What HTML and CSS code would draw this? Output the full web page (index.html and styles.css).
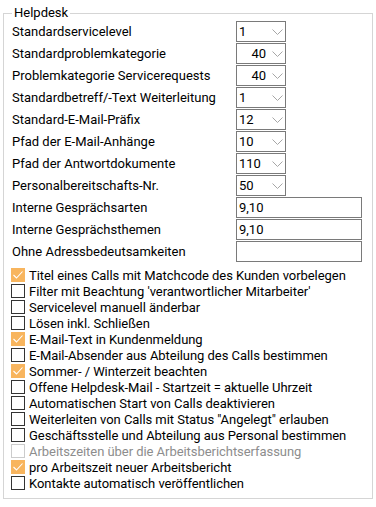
FILE: index.html
```html
<!DOCTYPE html>
<html lang="de">
<head>
    <meta charset="UTF-8">
    <title>Helpdesk</title>
    <link rel="stylesheet" href="styles.css">
</head>
<body>
    <fieldset class="group">
        <legend>Helpdesk</legend>

        <div class="fields">
            <label>Standardservicelevel</label>
            <div class="combo"><span class="value">1</span><svg class="chevron" width="11" height="6" viewBox="0 0 11 6"><path d="M0.5 0.5 L5.5 5.5 L10.5 0.5" /></svg></div>

            <label>Standardproblemkategorie</label>
            <div class="combo right"><span class="value">40</span><svg class="chevron" width="11" height="6" viewBox="0 0 11 6"><path d="M0.5 0.5 L5.5 5.5 L10.5 0.5" /></svg></div>

            <label>Problemkategorie Servicerequests</label>
            <div class="combo right"><span class="value">40</span><svg class="chevron" width="11" height="6" viewBox="0 0 11 6"><path d="M0.5 0.5 L5.5 5.5 L10.5 0.5" /></svg></div>

            <label>Standardbetreff/-Text Weiterleitung</label>
            <div class="combo"><span class="value">1</span><svg class="chevron" width="11" height="6" viewBox="0 0 11 6"><path d="M0.5 0.5 L5.5 5.5 L10.5 0.5" /></svg></div>

            <label>Standard-E-Mail-Präfix</label>
            <div class="combo"><span class="value">12</span><svg class="chevron" width="11" height="6" viewBox="0 0 11 6"><path d="M0.5 0.5 L5.5 5.5 L10.5 0.5" /></svg></div>

            <label>Pfad der E-Mail-Anhänge</label>
            <div class="combo"><span class="value">10</span><svg class="chevron" width="11" height="6" viewBox="0 0 11 6"><path d="M0.5 0.5 L5.5 5.5 L10.5 0.5" /></svg></div>

            <label>Pfad der Antwortdokumente</label>
            <div class="combo"><span class="value">110</span><svg class="chevron" width="11" height="6" viewBox="0 0 11 6"><path d="M0.5 0.5 L5.5 5.5 L10.5 0.5" /></svg></div>

            <label>Personalbereitschafts-Nr.</label>
            <div class="combo"><span class="value">50</span><svg class="chevron" width="11" height="6" viewBox="0 0 11 6"><path d="M0.5 0.5 L5.5 5.5 L10.5 0.5" /></svg></div>

            <label>Interne Gesprächsarten</label>
            <input class="text" type="text" value="9,10">

            <label>Interne Gesprächsthemen</label>
            <input class="text" type="text" value="9,10">

            <label>Ohne Adressbedeutsamkeiten</label>
            <input class="text" type="text" value="">
        </div>

        <ul class="checks">
            <li><span class="box checked"><svg width="14" height="14" viewBox="0 0 14 14"><path d="M2.5 7 L5.5 10 L11.5 3.5" /></svg></span>Titel eines Calls mit Matchcode des Kunden vorbelegen</li>
            <li><span class="box"></span>Filter mit Beachtung 'verantwortlicher Mitarbeiter'</li>
            <li><span class="box"></span>Servicelevel manuell änderbar</li>
            <li><span class="box"></span>Lösen inkl. Schließen</li>
            <li><span class="box checked"><svg width="14" height="14" viewBox="0 0 14 14"><path d="M2.5 7 L5.5 10 L11.5 3.5" /></svg></span>E-Mail-Text in Kundenmeldung</li>
            <li><span class="box"></span>E-Mail-Absender aus Abteilung des Calls bestimmen</li>
            <li><span class="box checked"><svg width="14" height="14" viewBox="0 0 14 14"><path d="M2.5 7 L5.5 10 L11.5 3.5" /></svg></span>Sommer- / Winterzeit beachten</li>
            <li><span class="box"></span>Offene Helpdesk-Mail - Startzeit = aktuelle Uhrzeit</li>
            <li><span class="box"></span>Automatischen Start von Calls deaktivieren</li>
            <li><span class="box"></span>Weiterleiten von Calls mit Status "Angelegt" erlauben</li>
            <li><span class="box"></span>Geschäftsstelle und Abteilung aus Personal bestimmen</li>
            <li class="disabled"><span class="box"></span>Arbeitszeiten über die Arbeitsberichtserfassung</li>
            <li><span class="box checked"><svg width="14" height="14" viewBox="0 0 14 14"><path d="M2.5 7 L5.5 10 L11.5 3.5" /></svg></span>pro Arbeitszeit neuer Arbeitsbericht</li>
            <li><span class="box"></span>Kontakte automatisch veröffentlichen</li>
        </ul>
    </fieldset>
</body>
</html>
```

FILE: styles.css
```css
/* Page */
body {
    margin: 0;
    padding: 5px 3px 0;
    background: #fff;
    font-family: Roboto, 'Liberation Sans', sans-serif;
    font-size: 13px;
    color: #000;
}

/* Group box */
.group {
    margin: 0;
    padding: 0 8px 8px;
    border: 1px solid #d5d5d5;
    min-width: 0;
}

.group legend {
    padding: 0 2px;
    margin-left: 0;
    line-height: 16px;
}

/* Label + control rows */
.fields {
    display: grid;
    grid-template-columns: 224px auto;
    grid-auto-rows: 21px;
    row-gap: 1px;
    align-items: center;
    justify-items: start;
}

.fields label {
    line-height: 21px;
    white-space: nowrap;
}

.combo {
    box-sizing: border-box;
    width: 50px;
    height: 21px;
    border: 1px solid #7a7a7a;
    display: flex;
    align-items: center;
    padding: 0 2px 0 2px;
}

.combo .value {
    flex: 1;
}

.combo.right .value {
    text-align: right;
    padding-right: 6px;
}

.chevron {
    display: block;
    fill: none;
    stroke: #a6a6a6;
    stroke-width: 1;
}

.text {
    box-sizing: border-box;
    width: 126px;
    height: 21px;
    margin: 0;
    border: 1px solid #7a7a7a;
    padding: 0 2px;
    font: inherit;
    color: #000;
    outline: none;
}

/* Checkbox list */
.checks {
    list-style: none;
    margin: 6px 0 0 -1px;
    padding: 0;
    display: flex;
    flex-direction: column;
    gap: 2px;
    letter-spacing: -0.05px;
}

.checks li {
    display: flex;
    align-items: center;
    gap: 4px;
    height: 14px;
    white-space: nowrap;
}

.box {
    box-sizing: border-box;
    width: 14px;
    height: 14px;
    border: 1px solid #333;
    background: #fff;
    flex: none;
}

.box svg {
    display: block;
    margin: -1px;
    fill: none;
    stroke: #fff;
    stroke-width: 1.1;
}

.box.checked {
    background: #f8b55e;
    border-color: #f8b55e;
}

.checks li.disabled {
    color: #8d8d8d;
}

.checks li.disabled .box {
    border-color: #cccccc;
}
```
